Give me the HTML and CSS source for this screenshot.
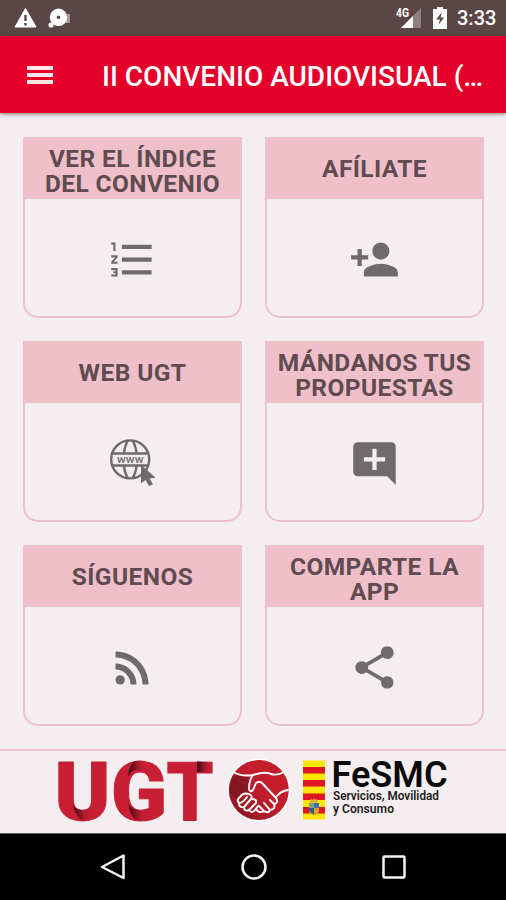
FILE: index.html
```html
<!DOCTYPE html>
<html lang="es">
<head>
  <meta charset="UTF-8">
  <meta name="viewport" content="width=device-width, initial-scale=1.0">
  <title>II CONVENIO AUDIOVISUAL</title>
  <link rel="stylesheet" href="styles.css">
</head>
<body>
  <div class="status-bar">
    <svg class="status-left" width="54" height="24" viewBox="0 0 54 24">
      <path d="M11.5 2.5L22 21H1z" fill="#fff" stroke="#fff" stroke-linejoin="round"/>
      <path d="M11.5 9v6M11.5 17v2.5" stroke="#5a4646" stroke-width="2.4"/>
      <path d="M48 8h8v9h-8z" fill="#a39899"/>
      <circle cx="44.5" cy="11.3" r="8.7" fill="#fff"/>
      <circle cx="44.5" cy="11.3" r="1.8" fill="#5a4646"/>
      <circle cx="37" cy="19" r="2.6" fill="#fff"/>
    </svg>
    <div class="status-right">
      <svg width="26" height="24" viewBox="0 0 26 24">
        <path d="M7 22L27 2v20z" fill="#8d8080"/>
        <path d="M7 22L19 10v12z" fill="#fff"/>
        <text class="network" x="2" y="11" textLength="13" lengthAdjust="spacingAndGlyphs">4G</text>
      </svg>
      <svg class="battery" width="14" height="22" viewBox="0 0 14 22">
        <path d="M4 0h6v2h4v20H0V2h4z" fill="#fff"/>
        <path d="M9 5L3 12.5h4L5.500 18 11 10.500H7.500z" fill="#5a4646"/>
      </svg>
      <span class="clock">3:33</span>
    </div>
  </div>

  <div class="app-bar">
    <div class="menu"><i></i><i></i><i></i></div>
    <h1>II CONVENIO AUDIOVISUAL (…</h1>
  </div>

  <div class="grid">
    <div class="card">
      <h2 class="two-lines">VER EL ÍNDICE<br>DEL CONVENIO</h2>
      <div class="card-body">
        <svg class="icon" viewBox="0 0 24 24"><path d="M2 17h2v.5H3v1h1v.5H2v1h3v-4H2v1zm1-9h1V4H2v1h1v3zm-1 3h1.800L2 13.100v.9h3v-1H3.200L5 10.900V10H2v1zm5-6v2h14V5H7zm0 14h14v-2H7v2zm0-6h14v-2H7v2z"/></svg>
      </div>
    </div>
    <div class="card">
      <h2>AFÍLIATE</h2>
      <div class="card-body">
        <svg class="icon" viewBox="0 0 24 24"><path d="M15 12c2.210 0 4-1.790 4-4s-1.790-4-4-4-4 1.790-4 4 1.790 4 4 4zm-9-2V7H4v3H1v2h3v3h2v-3h3v-2H6zm9 4c-2.670 0-8 1.340-8 4v2h16v-2c0-2.660-5.330-4-8-4z"/></svg>
      </div>
    </div>
    <div class="card">
      <h2>WEB UGT</h2>
      <div class="card-body">
        <svg class="icon" viewBox="0 0 51 51">
          <g fill="none" stroke="#6f6a6b" stroke-width="2.400">
            <circle cx="23.200" cy="21.400" r="19"/>
            <path d="M6 15.500h34.500M6 27.500h34.500"/>
            <path d="M21 2.500Q18 7 16.800 15.500M25.500 2.500Q28.500 7 29.700 15.500M16.800 27.500Q18 36 21 40.300M29.700 27.500Q28.500 36 25.500 40.300"/>
          </g>
          <text class="www" x="10" y="24.500" textLength="26.500" lengthAdjust="spacingAndGlyphs">www</text>
          <path d="M34 26.500V45.500l4.500-3.500 3.500 6 4-1.800-3.500-5.700 6-.8z"/>
        </svg>
      </div>
    </div>
    <div class="card">
      <h2 class="two-lines">MÁNDANOS TUS<br>PROPUESTAS</h2>
      <div class="card-body">
        <svg class="icon" viewBox="0 0 24 24"><path d="M21.990 4c0-1.100-.89-2-1.990-2H4c-1.100 0-2 .9-2 2v12c0 1.100.9 2 2 2h14l4 4-.01-18zM17 11h-4v4h-2v-4H7V9h4V5h2v4h4v2z"/></svg>
      </div>
    </div>
    <div class="card">
      <h2>SÍGUENOS</h2>
      <div class="card-body">
        <svg class="icon" viewBox="0 0 24 24"><circle cx="6.180" cy="17.820" r="2.180"/><path d="M4 4.440v2.830c7.030 0 12.730 5.700 12.730 12.730h2.830c0-8.590-6.970-15.560-15.560-15.560zm0 5.660v2.830c3.900 0 7.070 3.170 7.070 7.070h2.830c0-5.470-4.430-9.900-9.900-9.900z"/></svg>
      </div>
    </div>
    <div class="card">
      <h2 class="two-lines">COMPARTE LA<br>APP</h2>
      <div class="card-body">
        <svg class="icon" viewBox="0 0 24 24"><path d="M18 16.080c-.76 0-1.440.3-1.960.77L8.910 12.700c.05-.23.09-.46.09-.7s-.04-.47-.09-.7l7.050-4.110c.54.5 1.250.81 2.040.81 1.660 0 3-1.340 3-3s-1.340-3-3-3-3 1.340-3 3c0 .24.04.47.09.7L8.040 9.810C7.500 9.310 6.790 9 6 9c-1.660 0-3 1.340-3 3s1.340 3 3 3c.79 0 1.500-.31 2.040-.81l7.120 4.160c-.05.21-.08.43-.08.65 0 1.610 1.310 2.920 2.920 2.920s2.920-1.310 2.920-2.920-1.310-2.920-2.920-2.920z"/></svg>
      </div>
    </div>
  </div>

  <div class="footer">
    <svg width="506" height="82" viewBox="0 751 506 82">
      <defs>
        <linearGradient id="fold" x1="0" y1="0" x2="1" y2="0">
          <stop offset="0" stop-color="#2a0508"/>
          <stop offset="1" stop-color="#c81f35" stop-opacity="0"/>
        </linearGradient>
        <linearGradient id="ball" x1="0" y1="1" x2="1" y2="0">
          <stop offset="0" stop-color="#7c1520"/>
          <stop offset=".5" stop-color="#c01d2c"/>
          <stop offset="1" stop-color="#c81f2f"/>
        </linearGradient>
      </defs>
      <g class="ugt">
        <text x="54.500" y="819.500" textLength="56" lengthAdjust="spacingAndGlyphs">U</text>
        <text x="111" y="819.500" textLength="56" lengthAdjust="spacingAndGlyphs">G</text>
        <text x="166.500" y="819.500" textLength="47" lengthAdjust="spacingAndGlyphs">T</text>
      </g>
      <!-- ribbon folds -->
      <path d="M72.500 803C74 808 78 810 84 810L93 809V819Q87 821.500 80 819.500Q74 812 72.500 803z" fill="url(#fold)"/>
      <path d="M128.500 777C130 771 134 770 139 770L147 771V760.500Q138 759 133 762Q128 769 128.500 777z" fill="url(#fold)"/>
      <path d="M128.500 803C130 808 134 810 139 810L148 809V819Q142 821.500 135 819.500Q129 812 128.500 803z" fill="url(#fold)"/>
      <path d="M197 761.500H212V772H197z" fill="url(#fold)"/>

      <circle cx="258.800" cy="790" r="31.500" fill="#fff"/>
      <circle cx="258.800" cy="790" r="30" fill="url(#ball)"/>
      <path d="M233 775L249 777 249 791 238 800 230 793Q229 783 233 775z" fill="#5c111a" opacity=".45"/>
      <g fill="none" stroke="#fff" stroke-width="1.900" stroke-linecap="round" stroke-linejoin="round">
        <path d="M233 772Q242 777 253 775Q265 771 271 774Q277 776 284 772"/>
        <path d="M253 775Q249 780 249 789Q250 793 253 790L256 783Q260 780 263 784L276 798Q279 803 274 804L270 800M274 804Q276 809 270 810L264 803M270 810Q268 814 264 811L259 806M264 811Q259 814 256 809"/>
        <path d="M288 790Q281 791 277 796"/>
        <path d="M249 794Q243 792 240 797Q236 800 239 803Q243 803 247 797M239 803Q239 808 244 807L251 799Q253 796 249 794M244 807Q244 812 249 810L256 803Q257 799 252 799M249 810Q252 814 255 810L258 806"/>
      </g>

      <g>
        <path d="M303 760.500h22v59h-22z" fill="#ffe600"/>
        <path d="M303 767h22v6.500h-22zM303 780h22v6.500h-22zM303 793.500h22v6.500h-22zM303 807h22v6.500h-22z" fill="#df1722"/>
        <path d="M309 803h10v8q-1 4-5 4t-5-4z" fill="#d9a12f"/>
        <path d="M309 803h5v5h-5z" fill="#7f9e83"/>
        <path d="M314 803h5v5h-5z" fill="#3f6fae"/>
        <path d="M309 808h5v6q-4-1-5-4z" fill="#38578d"/>
        <path d="M310 803l1-4 2 1 1-2 1 2 2-1 1 4z" fill="#e3b52c"/>
      </g>

      <text class="fesmc" x="331.500" y="786.500" textLength="116" lengthAdjust="spacingAndGlyphs">FeSMC</text>
      <text class="sector" x="333" y="800" textLength="106" lengthAdjust="spacingAndGlyphs">Servicios, Movilidad</text>
      <text class="sector" x="333" y="813" textLength="61" lengthAdjust="spacingAndGlyphs">y Consumo</text>
    </svg>
  </div>

  <div class="nav-bar">
    <svg width="28" height="28" viewBox="0 0 28 28"><path d="M24.500 2.500v22.500L3 14z"/></svg>
    <svg width="28" height="28" viewBox="0 0 28 28"><circle cx="14" cy="14" r="11.500"/></svg>
    <svg width="28" height="28" viewBox="0 0 28 28"><rect x="3.500" y="3.500" width="21" height="21" rx="1"/></svg>
  </div>
</body>
</html>
```
FILE: styles.css
```css
* {
  box-sizing: border-box;
}
body {
  margin: 0;
  height: 900px;
  display: flex;
  flex-direction: column;
  overflow: hidden;
  background: #f5eef0;
  font-family: Roboto, "Liberation Sans", sans-serif;
}
.status-bar {
  height: 36px;
  padding: 0 11px 0 14px;
  background: #5a4646;
  display: flex;
  justify-content: space-between;
  align-items: flex-start;
}
.status-left {
  margin-top: 6px;
  overflow: visible;
}
.status-right {
  display: flex;
  padding-top: 6px;
}
.status-right svg {
  overflow: visible;
}
.battery {
  margin: 1px 10px 0 13px;
}
.network {
  font-size: 12px;
  font-weight: 700;
  fill: #fff;
}
.clock {
  width: 38px;
  color: #fff;
  font-size: 20px;
  font-weight: 500;
  line-height: 25px;
  white-space: nowrap;
}
.app-bar {
  height: 77px;
  padding-left: 27px;
  background: #e4002b;
  box-shadow: 0 1px 4px rgba(60, 40, 40, 0.6);
  display: flex;
  align-items: center;
}
.menu {
  width: 26px;
  margin-right: 49px;
  padding-top: 1px;
  display: flex;
  flex-direction: column;
  gap: 3px;
}
.menu i {
  height: 4px;
  background: #fde6e8;
}
h1 {
  margin: 3px 0 0;
  color: #fff;
  font-size: 28px;
  font-weight: 500;
  white-space: nowrap;
}
.grid {
  height: 636px;
  padding: 24px 22px 0 23px;
  display: grid;
  grid-template-columns: 219px 219px;
  grid-auto-rows: 181px;
  gap: 23px;
}
.card {
  display: flex;
  flex-direction: column;
  border: 2px solid #efbfca;
  border-top: 0;
  border-radius: 0 0 15px 15px;
}
.card h2 {
  height: 62px;
  margin: 0 -2px;
  padding-top: 1px;
  background: #efbfca;
  color: #604b50;
  display: flex;
  justify-content: center;
  align-items: center;
  text-align: center;
  font-size: 24.5px;
  font-weight: 700;
  line-height: 25px;
  letter-spacing: 0.4px;
}
.card .two-lines {
  padding-top: 5px;
}
.card-body {
  flex: 1;
  padding-top: 4px;
  display: flex;
  justify-content: center;
  align-items: center;
}
.icon {
  width: 51px;
  height: 51px;
  fill: #6f6a6b;
}
.www {
  font-size: 11px;
  font-weight: 500;
}
.footer {
  height: 84px;
  border-top: 2px solid #f2c6d0;
}
.footer svg {
  display: block;
  overflow: visible;
}
.ugt {
  font-size: 81px;
  font-weight: 900;
  fill: #c81f35;
  stroke: #c81f35;
  stroke-width: 1;
  stroke-linejoin: round;
}
.fesmc {
  font-size: 36px;
  font-weight: 600;
  fill: #0b0b0b;
}
.sector {
  font-size: 12px;
  font-weight: 600;
  fill: #1c1c1c;
}
.nav-bar {
  height: 67px;
  padding-left: 1px;
  background: #000;
  border-top: 1px solid #666;
  display: flex;
  justify-content: center;
  align-items: center;
  gap: 112.5px;
}
.nav-bar svg {
  fill: none;
  stroke: #f4f4f4;
  stroke-width: 2.5;
  stroke-linejoin: round;
}
```
